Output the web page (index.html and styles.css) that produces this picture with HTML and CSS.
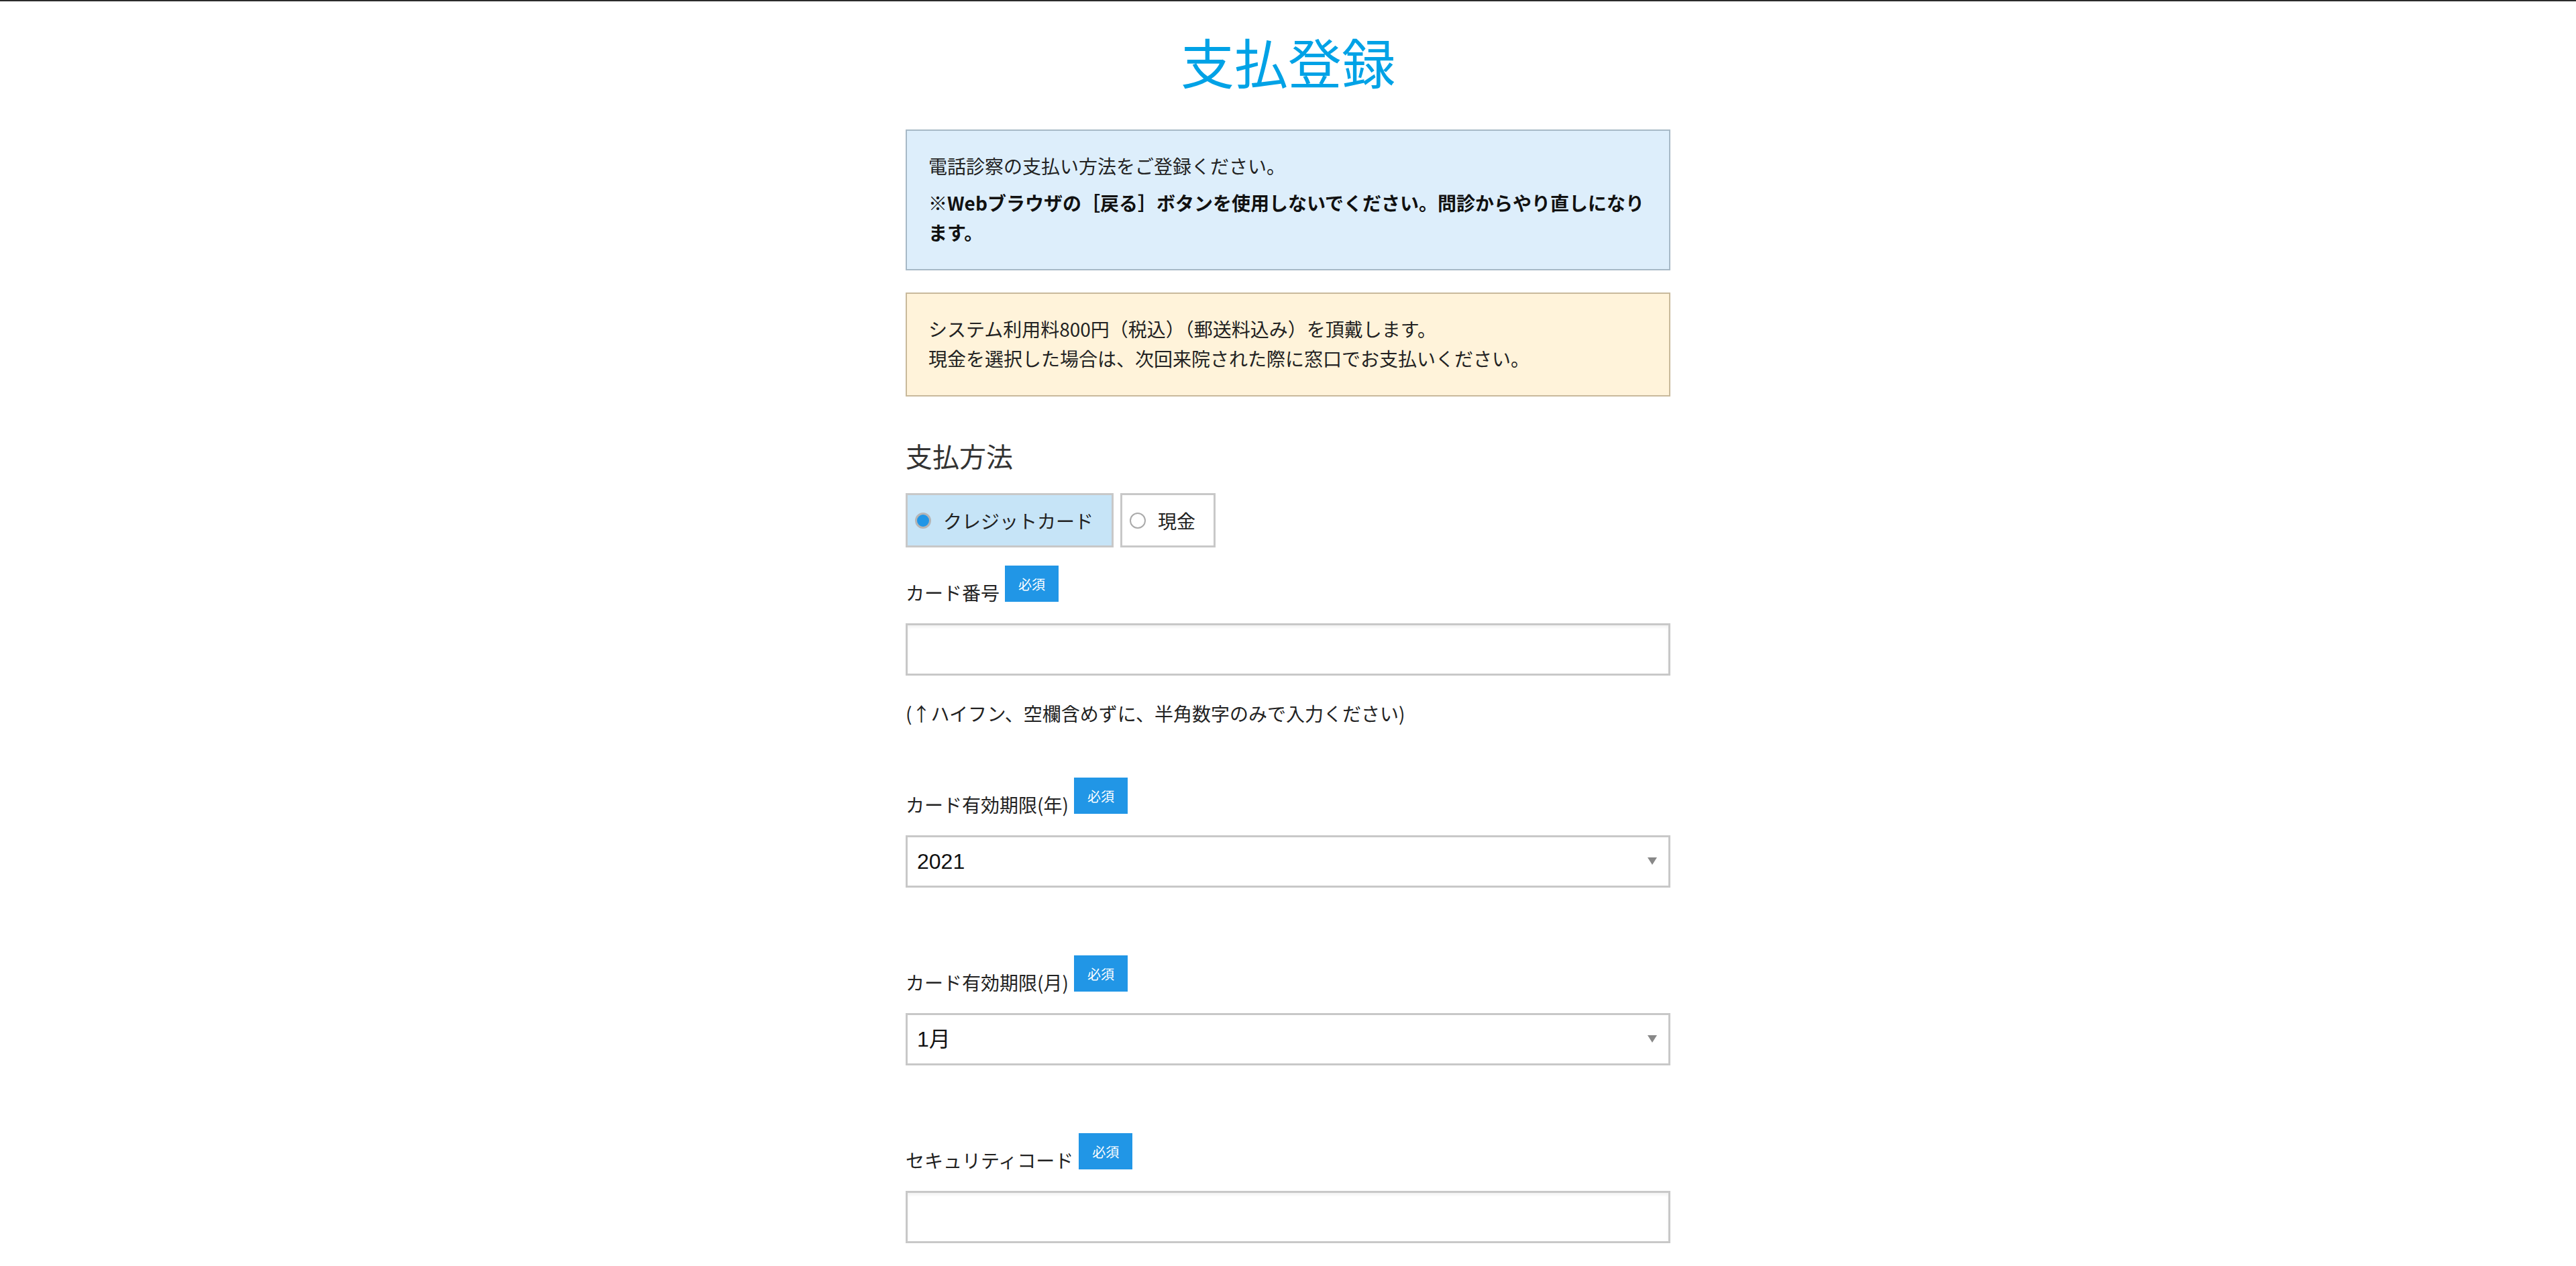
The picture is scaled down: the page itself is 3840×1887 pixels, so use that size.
FILE: index.html
```html
<!DOCTYPE html>
<html lang="ja">
<head>
    <meta charset="UTF-8">
    <meta name="viewport" content="width=device-width, initial-scale=1.0">
    <title>支払登録</title>
    <link rel="stylesheet" href="styles.css">
</head>
<body>

<div class="page">
    <h1 class="page-title">支払登録</h1>

    <div class="notice notice-info">
        <p>電話診察の支払い方法をご登録ください。</p>
        <p class="strong">※Webブラウザの［戻る］ボタンを使用しないでください。問診からやり直しになります。</p>
    </div>

    <div class="notice notice-warn">
        <p>システム利用料800円（税込）（郵送料込み）を頂戴します。<br>現金を選択した場合は、次回来院された際に窓口でお支払いください。</p>
    </div>

    <h2 class="section-title">支払方法</h2>
    <div class="pay-methods">
        <label class="pay-option is-checked"><input type="radio" name="pay" value="card" checked onchange="selectPay(this)"><span>クレジットカード</span></label>
        <label class="pay-option"><input type="radio" name="pay" value="cash" onchange="selectPay(this)"><span>現金</span></label>
    </div>

    <div class="field field-first">
        <div class="field-head">
            <label for="card-no">カード番号</label>
            <span class="required">必須</span>
        </div>
        <input type="text" id="card-no" class="text-input">
        <p class="field-note">(↑ハイフン、空欄含めずに、半角数字のみで入力ください)</p>
    </div>

    <div class="field">
        <div class="field-head">
            <label for="exp-year">カード有効期限(年)</label>
            <span class="required">必須</span>
        </div>
        <div class="select-wrap">
            <select id="exp-year" class="select-input">
                <option>2021</option>
                <option>2022</option>
                <option>2023</option>
                <option>2024</option>
                <option>2025</option>
            </select>
        </div>
    </div>

    <div class="field">
        <div class="field-head">
            <label for="exp-month">カード有効期限(月)</label>
            <span class="required">必須</span>
        </div>
        <div class="select-wrap">
            <select id="exp-month" class="select-input">
                <option>1月</option>
                <option>2月</option>
                <option>3月</option>
                <option>4月</option>
                <option>5月</option>
                <option>6月</option>
                <option>7月</option>
                <option>8月</option>
                <option>9月</option>
                <option>10月</option>
                <option>11月</option>
                <option>12月</option>
            </select>
        </div>
    </div>

    <div class="field">
        <div class="field-head">
            <label for="cvc">セキュリティコード</label>
            <span class="required">必須</span>
        </div>
        <input type="text" id="cvc" class="text-input">
    </div>
</div>

<script>
    // highlight the chosen payment box
    function selectPay(radio) {
        document.querySelectorAll('.pay-option').forEach(opt => {
            opt.classList.remove('is-checked');
        });
        radio.parentNode.classList.add('is-checked');
    }
</script>

</body>
</html>
```

FILE: styles.css
```css
body {
    margin: 0;
    background: #fff;
    border-top: 2px solid #2b2b2b;
    font-family: "Noto Sans CJK JP", "Noto Sans", sans-serif;
    color: #222;
}
.page {
    width: 1140px;
    margin: 0 auto;
    padding-bottom: 120px;
}
.page-title {
    margin: 48px 0 0;
    font-size: 80px;
    line-height: 80px;
    font-weight: normal;
    text-align: center;
    color: #00a2e6;
}
.notice {
    border: 2px solid;
    padding: 30px 32px 33px;
    font-size: 28px;
    line-height: 44px;
}
.notice p {
    margin: 0;
}
.notice p + p {
    margin-top: 11px;
}
.notice-info {
    margin-top: 63px;
    background: #ddeefb;
    border-color: #a7b9c6;
}
.notice-warn {
    margin-top: 33px;
    background: #fff3da;
    border-color: #c8b99b;
}
.strong {
    font-weight: bold;
    color: #111;
}
.section-title {
    margin: 64px 0 32px;
    font-size: 40px;
    line-height: 48px;
    font-weight: normal;
    color: #333;
}
.pay-methods {
    display: flex;
    gap: 10px;
    margin-bottom: 27px;
}
.pay-option {
    display: flex;
    align-items: center;
    gap: 18px;
    box-sizing: border-box;
    height: 81px;
    padding: 0 27px 0 11px;
    border: 3px solid #c8c8c8;
    background: #fff;
    font-size: 28px;
    line-height: 28px;
    cursor: pointer;
}
.pay-option.is-checked {
    background: #c6e4f7;
}
.pay-option input {
    appearance: none;
    -webkit-appearance: none;
    box-sizing: border-box;
    width: 24px;
    height: 24px;
    margin: 0;
    border: 2px solid #aaa;
    border-radius: 50%;
    background: #fff;
}
.pay-option input:checked {
    border: 3px solid #b5b5b5;
    background: #2196e6;
}
.field {
    margin-bottom: 101px;
}
.field-first {
    margin-bottom: 82px;
}
.field-head {
    display: flex;
    align-items: flex-end;
    gap: 8px;
    margin-bottom: 32px;
}
.field-head label {
    font-size: 28px;
    line-height: 28px;
}
.required {
    display: flex;
    align-items: center;
    justify-content: center;
    width: 80px;
    height: 54px;
    background: #2196e6;
    color: #fff;
    font-size: 20px;
}
.text-input, .select-input {
    display: block;
    box-sizing: border-box;
    width: 100%;
    height: 78px;
    margin: 0;
    border: 3px solid #c8c8c8;
    border-radius: 0;
    background: #fff;
    font-size: 32px;
    font-family: "Liberation Sans", "Noto Sans CJK JP", sans-serif;
    color: #111;
}
.text-input {
    padding: 0 14px;
    box-shadow: inset 0 3px 4px rgba(0, 0, 0, 0.06);
}
.select-wrap {
    position: relative;
}
.select-input {
    appearance: none;
    -webkit-appearance: none;
    padding: 0 14px;
}
.select-wrap::after {
    content: "";
    position: absolute;
    right: 20px;
    top: 33px;
    border-left: 7px solid transparent;
    border-right: 7px solid transparent;
    border-top: 11px solid #888;
    pointer-events: none;
}
.field-note {
    margin: 42px 0 0;
    font-size: 28px;
    line-height: 28px;
}
```
